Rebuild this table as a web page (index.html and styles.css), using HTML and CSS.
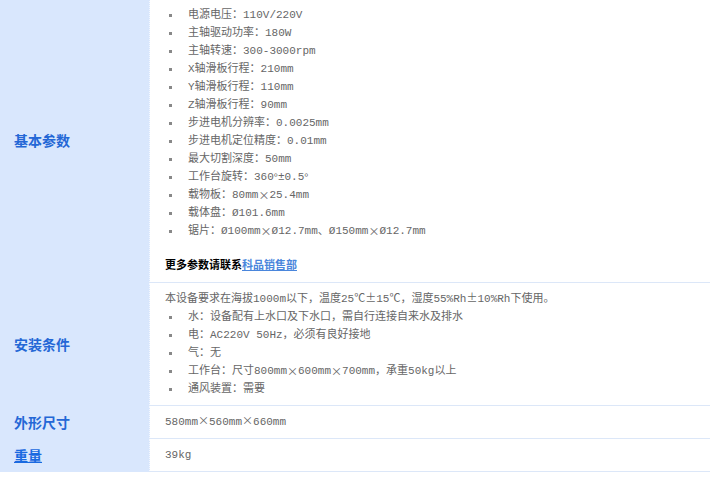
FILE: index.html
```html
<!DOCTYPE html>
<html lang="zh-CN">
<head>
    <meta charset="UTF-8">
    <meta name="viewport" content="width=device-width, initial-scale=1.0">
    <title>产品参数</title>
    <link rel="stylesheet" href="styles.css">
</head>
<body>
    <table class="spec">
        <tr class="first">
            <th>基本参数</th>
            <td>
                <ul class="dots">
                    <li>电源电压：110V/220V</li>
                    <li>主轴驱动功率：180W</li>
                    <li>主轴转速：300-3000rpm</li>
                    <li>X轴滑板行程：210mm</li>
                    <li>Y轴滑板行程：110mm</li>
                    <li>Z轴滑板行程：90mm</li>
                    <li>步进电机分辨率：0.0025mm</li>
                    <li>步进电机定位精度：0.01mm</li>
                    <li>最大切割深度：50mm</li>
                    <li>工作台旋转：360<span class="w">°</span>±0.5<span class="w">°</span></li>
                    <li>载物板：80mm<span class="w">×</span>25.4mm</li>
                    <li>载体盘：Ø101.6mm</li>
                    <li>锯片：Ø100mm<span class="w">×</span>Ø12.7mm、Ø150mm<span class="w">×</span>Ø12.7mm</li>
                </ul>
                <p class="more">更多参数请联系<a href="#">科品销售部</a></p>
            </td>
        </tr>
        <tr>
            <th>安装条件</th>
            <td>
                <p>本设备要求在海拔1000m以下，温度25℃<span class="w">±</span>15℃，湿度55%Rh<span class="w">±</span>10%Rh下使用。</p>
                <ul class="dots">
                    <li>水：设备配有上水口及下水口，需自行连接自来水及排水</li>
                    <li>电：AC220V 50Hz，必须有良好接地</li>
                    <li>气：无</li>
                    <li>工作台：尺寸800mm<span class="w">×</span>600mm<span class="w">×</span>700mm，承重50kg以上</li>
                    <li>通风装置：需要</li>
                </ul>
            </td>
        </tr>
        <tr>
            <th>外形尺寸</th>
            <td>580mm<span class="w">×</span>560mm<span class="w">×</span>660mm</td>
        </tr>
        <tr>
            <th><a href="#">重量</a></th>
            <td>39kg</td>
        </tr>
    </table>
</body>
</html>
```

FILE: styles.css
```css
body {
    margin: 0;
    padding: 0;
    background-color: #fff;
    font-family: "Liberation Mono", "Noto Sans CJK SC", monospace;
}
.spec {
    width: 100%;
    border-collapse: collapse;
    margin-top: -3px;
}
.spec th {
    width: 135px;
    padding: 0 0 0 14px;
    background-color: #d9e7fd;
    border-right: 1px dotted #f4f8ff;
    color: #2467d6;
    font-family: "Noto Sans CJK SC", sans-serif;
    font-size: 14px;
    font-weight: bold;
    text-align: left;
    vertical-align: middle;
}
.spec th a {
    color: #1a6ae0;
    text-decoration: underline;
}
.spec td {
    padding: 7px 15px;
    border-bottom: 1px solid #dce7f8;
    color: #666;
    font-size: 11px;
    line-height: 18px;
    vertical-align: top;
}
.spec .first td {
    padding-top: 9px;
}
.spec td p {
    margin: 0;
}
.w {
    font-family: "Noto Sans CJK SC", sans-serif;
    line-height: 1;
}
.dots {
    list-style: none;
    margin: 0;
    padding: 0;
}
.dots li {
    display: flex;
    align-items: center;
}
.dots li::before {
    content: "";
    width: 3px;
    height: 3px;
    margin: 0 16px 0 4px;
    background-color: #888;
    flex-shrink: 0;
}
.more {
    margin-top: 17px !important;
    color: #000;
    font-weight: bold;
}
.more a {
    color: #4a86dc;
    text-decoration: underline;
}
```
